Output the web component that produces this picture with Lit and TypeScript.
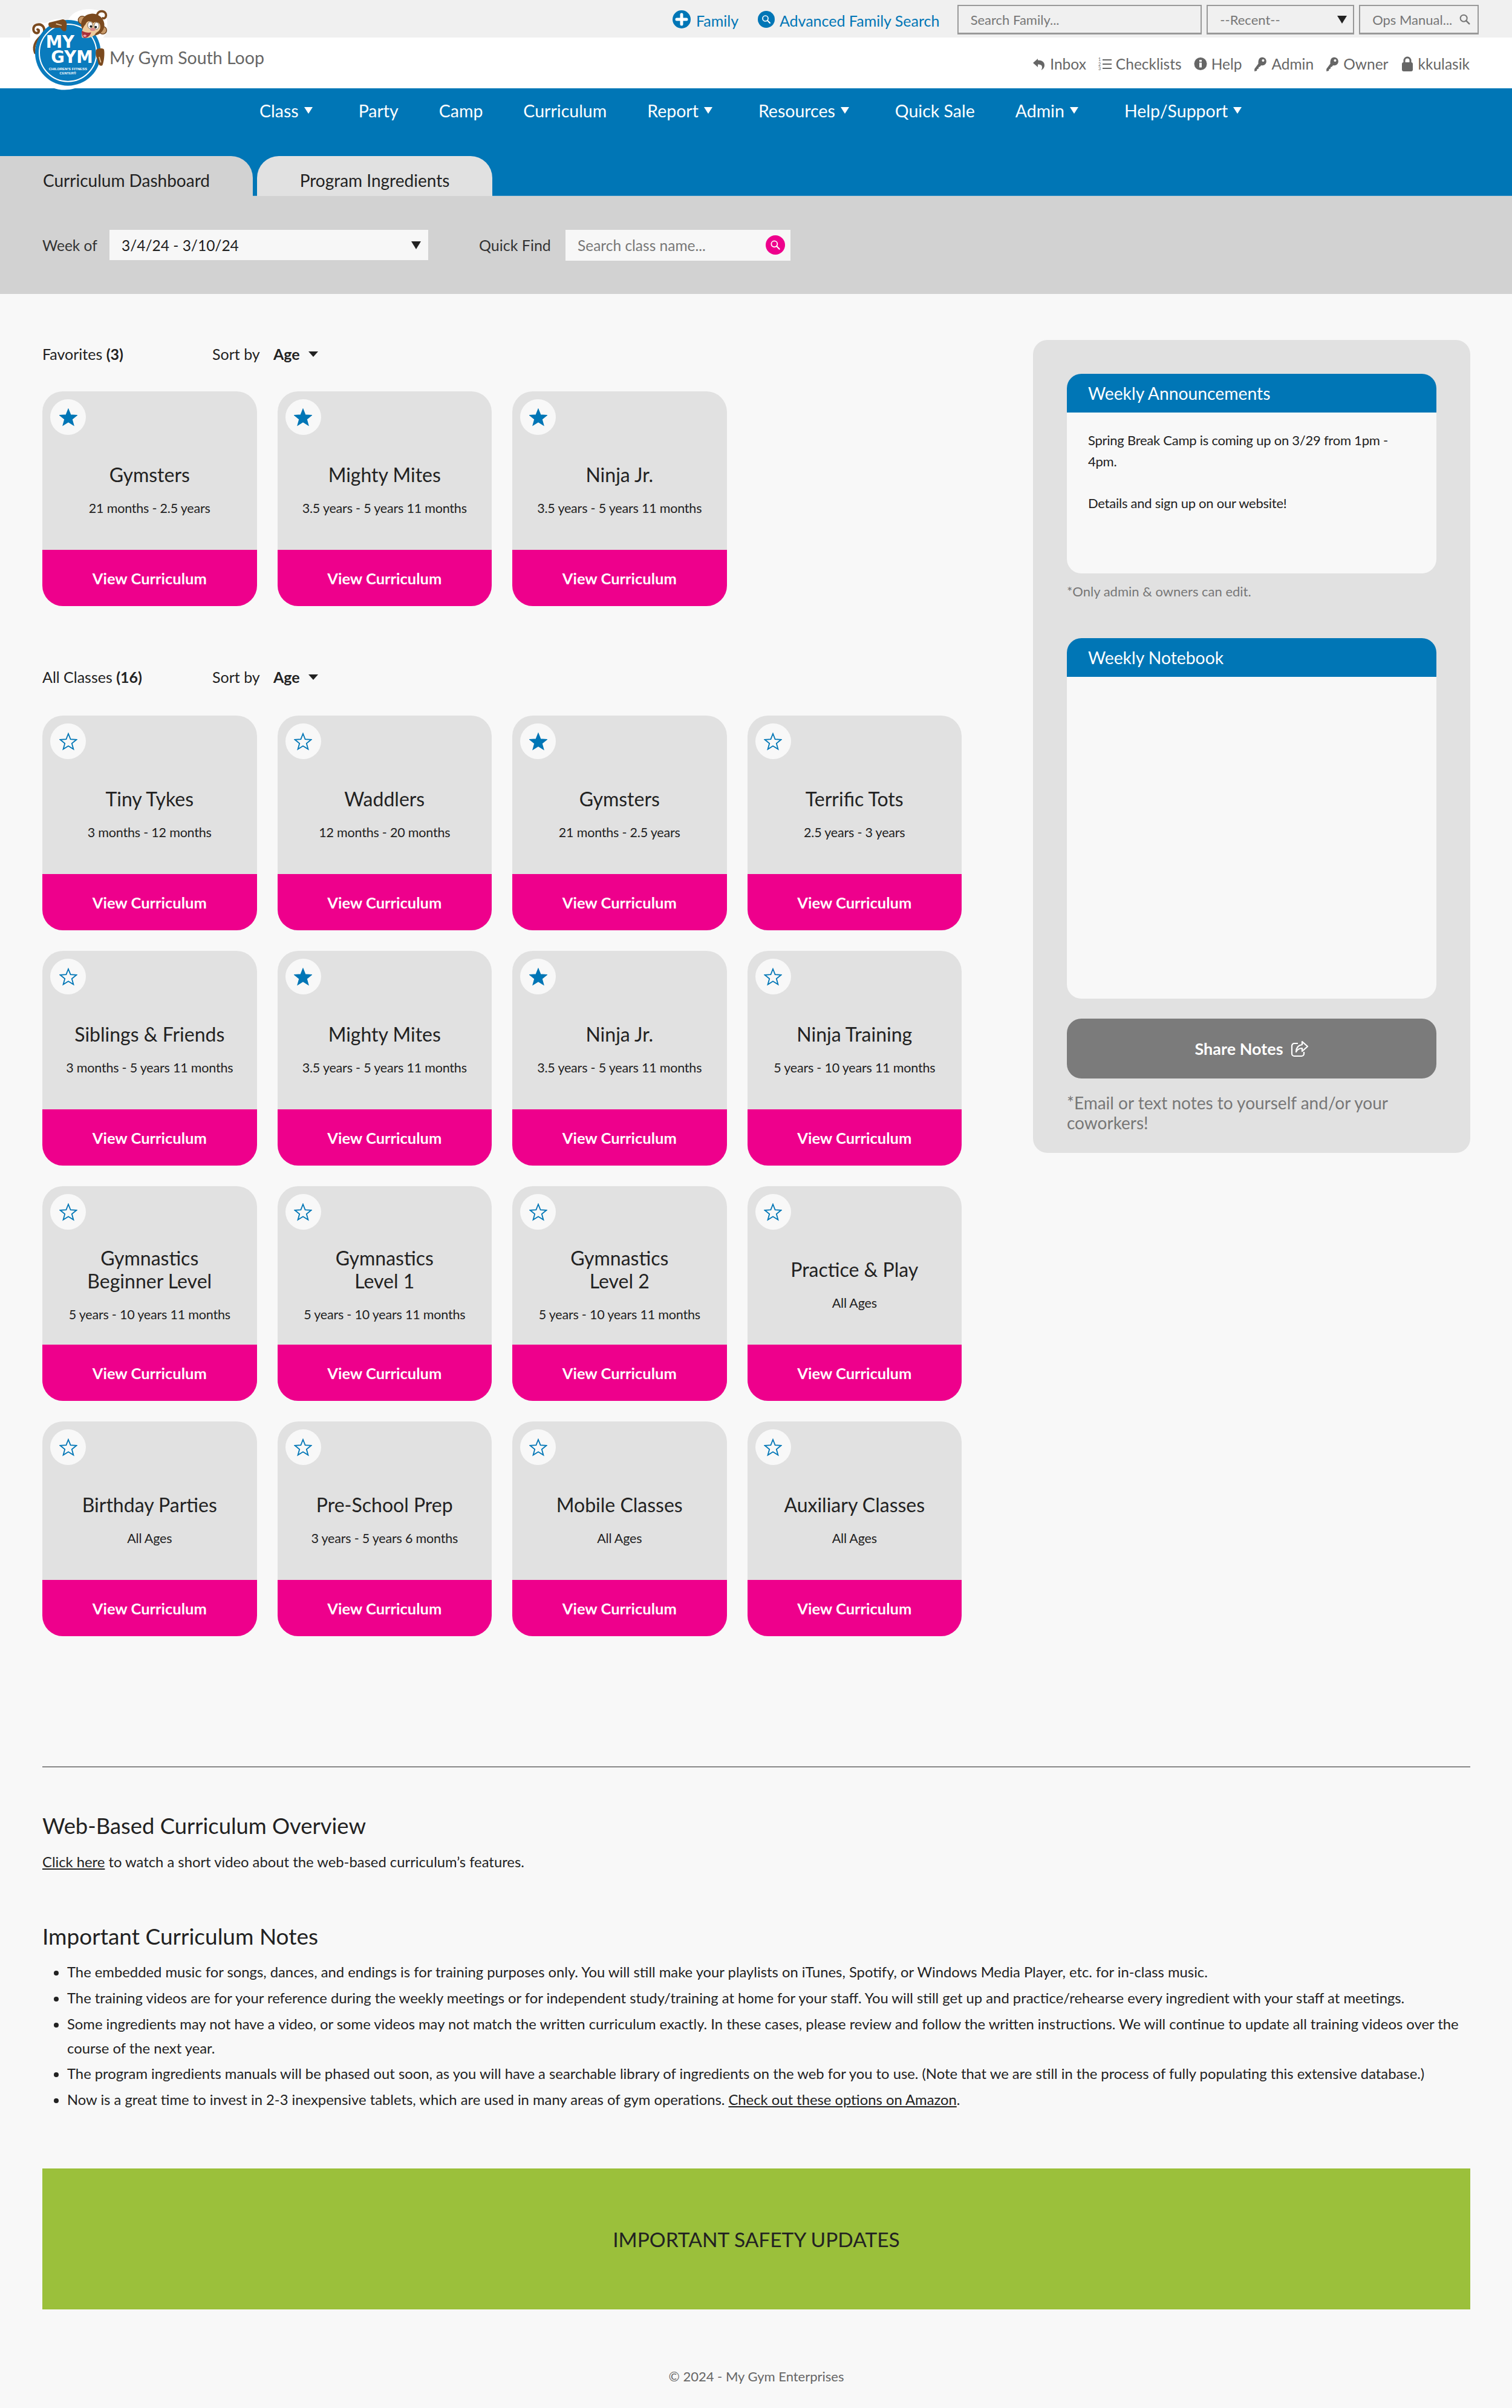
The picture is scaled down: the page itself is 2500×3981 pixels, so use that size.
import { LitElement, css, html, svg } from 'lit';
import { customElement } from 'lit/decorators.js';

interface GymClass {
  name: string[];
  ages: string;
  fav: boolean;
}

const favorites: GymClass[] = [
  { name: ['Gymsters'], ages: '21 months - 2.5 years', fav: true },
  { name: ['Mighty Mites'], ages: '3.5 years - 5 years 11 months', fav: true },
  { name: ['Ninja Jr.'], ages: '3.5 years - 5 years 11 months', fav: true },
];

const classes: GymClass[] = [
  { name: ['Tiny Tykes'], ages: '3 months - 12 months', fav: false },
  { name: ['Waddlers'], ages: '12 months - 20 months', fav: false },
  { name: ['Gymsters'], ages: '21 months - 2.5 years', fav: true },
  { name: ['Terrific Tots'], ages: '2.5 years - 3 years', fav: false },
  { name: ['Siblings & Friends'], ages: '3 months - 5 years 11 months', fav: false },
  { name: ['Mighty Mites'], ages: '3.5 years - 5 years 11 months', fav: true },
  { name: ['Ninja Jr.'], ages: '3.5 years - 5 years 11 months', fav: true },
  { name: ['Ninja Training'], ages: '5 years - 10 years 11 months', fav: false },
  { name: ['Gymnastics', 'Beginner Level'], ages: '5 years - 10 years 11 months', fav: false },
  { name: ['Gymnastics', 'Level 1'], ages: '5 years - 10 years 11 months', fav: false },
  { name: ['Gymnastics', 'Level 2'], ages: '5 years - 10 years 11 months', fav: false },
  { name: ['Practice & Play'], ages: 'All Ages', fav: false },
  { name: ['Birthday Parties'], ages: 'All Ages', fav: false },
  { name: ['Pre-School Prep'], ages: '3 years - 5 years 6 months', fav: false },
  { name: ['Mobile Classes'], ages: 'All Ages', fav: false },
  { name: ['Auxiliary Classes'], ages: 'All Ages', fav: false },
];

const navItems = [
  { label: 'Class', caret: true },
  { label: 'Party', caret: false },
  { label: 'Camp', caret: false },
  { label: 'Curriculum', caret: false },
  { label: 'Report', caret: true },
  { label: 'Resources', caret: true },
  { label: 'Quick Sale', caret: false },
  { label: 'Admin', caret: true },
  { label: 'Help/Support', caret: true },
];

const magnifier = (stroke: string) => svg`<circle cx="10" cy="10" r="6" fill="none" stroke=${stroke} stroke-width="2.2"/><path d="M14.5 14.5 20 20" stroke=${stroke} stroke-width="2.6" stroke-linecap="round"/>`;

const keyIcon = html`<svg class="ico" viewBox="0 0 24 28"><path fill="#666" fill-rule="evenodd" d="M15 2c4.500 0 8 3 8 7.500S19.500 17 15.500 17c-.8 0-1.500-.1-2.200-.3L11 19.500l-2 .5-.5 3-2.500.8-.7 3.200-4.300 1 0-4.500L8.200 13.800C7.500 6.500 10.500 2 15 2zm2 3.500a2.300 2.300 0 1 0 0 4.600 2.300 2.300 0 0 0 0-4.600z"/></svg>`;

@customElement('app-root')
export class AppRoot extends LitElement {
  static styles = css`
    :host {
      display: block;
      width: 2500px;
      min-height: 3981px;
      background: #f8f8f8;
      font-family: Lato, "Liberation Sans", sans-serif;
      color: #222;
      font-size: 24px;
    }
    * { box-sizing: border-box; }
    a { color: inherit; }

    .header { position: relative; }
    .logo { position: absolute; left: 30px; top: 0; width: 180px; height: 150px; z-index: 2; }

    .topbar {
      height: 62px;
      background: #f0f0f0;
      display: flex;
      align-items: center;
      padding: 3px 55px 0 1112px;
      color: #0076b6;
      font-size: 25px;
    }
    .toplink { display: flex; align-items: center; gap: 9px; padding-top: 2px; }
    .toplink svg { width: 30px; height: 30px; display: block; margin-top: -3px; }
    .toplink.family { width: 140px; }
    .toplink.adv { width: 331px; gap: 7px; }
    .field {
      height: 49px;
      border: 2px solid #999;
      border-bottom-width: 3px;
      color: #777;
      font-size: 22px;
      display: flex;
      align-items: center;
      justify-content: space-between;
      padding: 0 10px 0 20px;
      margin-right: 8px;
    }
    .field svg { width: 22px; height: 22px; }
    .field.family { width: 405px; }
    .field.recent { width: 244px; }
    .field.ops { width: 198px; margin-right: 0; }
    .select-caret {
      width: 0; height: 0;
      border-left: 8px solid transparent;
      border-right: 8px solid transparent;
      border-top: 13px solid #222;
    }

    .brandbar {
      height: 84px;
      background: #fff;
      display: flex;
      align-items: center;
      justify-content: space-between;
      padding: 0 70px 0 181px;
      color: #666;
    }
    .brandname { font-size: 28.500px; padding-bottom: 18px; }
    .userlinks { display: flex; gap: 20px; font-size: 24.500px; padding-top: 2px; }
    .userlink { display: flex; align-items: center; gap: 7px; }
    .ico { height: 25px; width: 22px; display: block; }

    .nav {
      height: 178px;
      background: #0076b6;
      position: relative;
      border-bottom: 1px solid #2a8cc2;
    }
    .navlinks {
      display: flex;
      padding: 20px 0 0 395.500px;
      color: #fff;
      font-size: 28.500px;
      line-height: 34px;
    }
    .navitem { padding: 0 33.500px; display: flex; gap: 9px; }
    .navitem.drop { padding-right: 42.500px; }
    .navcaret {
      width: 0; height: 0; margin-top: 11px;
      border-left: 7px solid transparent;
      border-right: 7px solid transparent;
      border-top: 11px solid #fff;
    }
    .tabs { position: absolute; left: 0; bottom: -1px; display: flex; gap: 7px; }
    .tab {
      height: 66px;
      padding-top: 8px;
      font-size: 28px;
      line-height: 64px;
      text-align: center;
      border-radius: 0 36px 0 0;
    }
    .tab.active { width: 418px; background: #d2d2d2; }
    .tab.other { width: 389px; background: #e1e1e1; border-radius: 36px 36px 0 0; }

    .filter {
      height: 162px;
      background: #d2d2d2;
      display: flex;
      align-items: center;
      padding-left: 70px;
      font-size: 24.500px;
      color: #333;
    }
    .filter .week { width: 111px; }
    .weekselect {
      width: 527px;
      height: 50px;
      background: #f7f7f7;
      display: flex;
      align-items: center;
      justify-content: space-between;
      padding: 0 12px 0 20px;
      color: #222;
    }
    .quick { width: 143px; margin-left: 84px; font-size: 25px; }
    .quicksearch {
      width: 372px;
      height: 51px;
      background: #f7f7f7;
      display: flex;
      align-items: center;
      justify-content: space-between;
      padding: 0 9px 0 20px;
      color: #777;
    }
    .pinkdot {
      width: 32px; height: 32px; border-radius: 50%;
      background: #ee008c;
      display: flex; align-items: center; justify-content: center;
    }
    .pinkdot svg { width: 20px; height: 20px; }

    .content {
      display: flex;
      justify-content: space-between;
      padding: 76px 69px 0 70px;
    }
    .left { width: 1518px; }
    .sechead {
      height: 46px;
      display: flex;
      align-items: center;
      font-size: 25px;
      margin-bottom: 39px;
    }
    .sechead.all { margin-top: 94px; margin-bottom: 41px; }
    .sechead .count { width: 281px; }
    .sechead b { font-weight: 700; }
    .sort { width: 101px; }
    .age { font-weight: 700; margin-right: 14px; }
    .sortcaret {
      width: 0; height: 0;
      border-left: 8px solid transparent;
      border-right: 8px solid transparent;
      border-top: 9px solid #222;
    }

    .grid {
      display: grid;
      grid-template-columns: repeat(4, 354.500px);
      column-gap: 34px;
      row-gap: 34px;
    }
    .card {
      position: relative;
      height: 355px;
      border-radius: 34px;
      overflow: hidden;
      background: #e1e1e1;
      display: flex;
      flex-direction: column;
    }
    .starbtn {
      position: absolute; left: 13px; top: 13px;
      width: 59px; height: 59px; border-radius: 50%;
      background: #f8f8f8;
      display: flex; align-items: center; justify-content: center;
    }
    .starbtn svg { width: 30px; height: 30px; }
    .cardbody {
      height: 262px;
      padding-top: 64px;
      display: flex;
      flex-direction: column;
      justify-content: center;
      align-items: center;
      text-align: center;
    }
    .title { font-size: 32px; line-height: 38px; }
    .ages { font-size: 21.500px; letter-spacing: -0.2px; line-height: 30px; margin-top: 21px; }
    .viewbtn {
      height: 93px;
      background: #ee008c;
      color: #fff;
      font-weight: 700;
      font-size: 25.500px;
      display: flex;
      align-items: center;
      justify-content: center;
    }

    .side {
      width: 723px;
      background: #e1e1e1;
      border-radius: 24px;
      padding: 56px 56px 0;
      height: 1344px;
    }
    .panelhead {
      height: 64px;
      background: #0076b6;
      color: #fff;
      font-size: 28.300px;
      line-height: 64px;
      padding-left: 35px;
      border-radius: 24px 24px 0 0;
    }
    .panelbody { background: #f8f8f8; border-radius: 0 0 24px 24px; }
    .panelbody.news { height: 266px; padding: 28px 35px; font-size: 22px; letter-spacing: -0.25px; line-height: 35px; }
    .panelbody.news p { margin: 0 0 34px; }
    .panelbody.notes { height: 532px; }
    .only { color: #777; font-size: 22px; line-height: 30px; margin: 15px 0 62px; }
    .sharebtn {
      height: 99px;
      margin-top: 33px;
      background: #7b7b7b;
      color: #fff;
      font-weight: 700;
      font-size: 27px;
      border-radius: 24px;
      display: flex; align-items: center; justify-content: center; gap: 12px;
    }
    .sharebtn svg { width: 30px; height: 28px; }
    .sharenote { color: #777; font-size: 28px; line-height: 33px; margin-top: 24px; }

    .lower { padding: 0 69px 0 70px; }
    .rule { border: 0; border-top: 2px solid #888; margin: 215px 0 0; }
    h2 { font-weight: 400; font-size: 37px; line-height: 46px; margin: 0; }
    h2.overview { margin-top: 73px; font-size: 36.400px; }
    h2.notes { margin-top: 80px; }
    .lower p { margin: 17px 0 0; font-size: 23.800px; line-height: 40px; }
    .lower ul { margin: 16px 0 0; padding-left: 41px; font-size: 23.800px; line-height: 40px; }
    .lower li { margin-bottom: 2.800px; }
    .safety {
      margin-top: 94px;
      height: 233px;
      background: #9bc03b;
      display: flex; align-items: center; justify-content: center;
      font-size: 33.500px;
    }
    .footer { height: 163px; padding-top: 89px; text-align: center; font-size: 22px; line-height: 44px; color: #666; }
  `;

  private star(filled: boolean) {
    const pts = '15,2 18.600,11.200 28.500,11.800 20.800,18 23.400,27.600 15,22.200 6.600,27.600 9.200,18 1.500,11.800 11.400,11.200';
    return html`<div class="starbtn"><svg viewBox="0 0 30 30">
      <polygon points=${pts} fill=${filled ? '#0076b6' : 'none'} stroke="#0076b6" stroke-width="1.800"></polygon>
    </svg></div>`;
  }

  private card(c: GymClass) {
    return html`<div class="card">
      ${this.star(c.fav)}
      <div class="cardbody">
        <div class="title">${c.name.map((l) => html`<div>${l}</div>`)}</div>
        <div class="ages">${c.ages}</div>
      </div>
      <div class="viewbtn">View Curriculum</div>
    </div>`;
  }

  private logo() {
    return html`<svg class="logo" viewBox="0 0 540 450">
      <path d="M60 170c0-50 40-65 75-55 30-20 90-30 110-10 30-70 130-70 190-40 15 60 10 120-40 140l20 100c5 30-10 50-30 50-40 90-190 130-270 40-40-50-50-100-40-140-20-30-15-60-15-85z" fill="#fff"/>
      <path d="M84 262C68 222 98 192 122 172c18-26 2-56-28-50-24 6-24 40-2 42 12 0 14-16 4-18" fill="none" stroke="#7b4a1f" stroke-width="12" stroke-linecap="round"/>
      <circle cx="247" cy="262" r="163" fill="#0a7bbd"/>
      <circle cx="247" cy="262" r="142" fill="none" stroke="#fff" stroke-width="6"/>
      <text x="137" y="236" font-family="DejaVu Sans" font-weight="700" font-size="84" textLength="142" lengthAdjust="spacingAndGlyphs" fill="#fff">MY</text>
      <text x="163" y="313" font-family="DejaVu Sans" font-weight="700" font-size="84" textLength="208" lengthAdjust="spacingAndGlyphs" fill="#fff">GYM</text>
      <text x="247" y="349" text-anchor="middle" font-family="Liberation Sans" font-weight="700" font-size="17" textLength="190" lengthAdjust="spacingAndGlyphs" fill="#fff">CHILDREN'S FITNESS</text>
      <text x="247" y="369" text-anchor="middle" font-family="Liberation Sans" font-weight="700" font-size="17" fill="#fff">CENTER®</text>
      <path d="M155 112l62-15c14-4 24 8 24 24l-2 26c-1 10-14 10-20 4l-10-14-40 2c-18-2-24-22-14-27z" fill="#7b4a1f"/>
      <path d="M188 118l28 8" stroke="#e8c9a0" stroke-width="5"/>
      <path d="M386 250c0-10 36-14 40-4 4 20 0 60-8 78-6 6-18 0-20-8l-6-26c-8-8-8-30-6-40z" fill="#7b4a1f"/>
      <path d="M402 282l8 28" stroke="#e8c9a0" stroke-width="5"/>
      <path d="M392 72c8-24 44-20 44 4 0 12-10 18-16 14" fill="none" stroke="#7b4a1f" stroke-width="11" stroke-linecap="round"/>
      <circle cx="318" cy="100" r="20" fill="#c89a6a" stroke="#6b3f18" stroke-width="4"/>
      <circle cx="420" cy="150" r="19" fill="#c89a6a" stroke="#6b3f18" stroke-width="4"/>
      <ellipse cx="370" cy="122" rx="58" ry="54" transform="rotate(15 370 122)" fill="#7b4a1f"/>
      <path d="M335 120c6-20 30-18 36-4 10-12 36-6 36 12 4 22-14 30-22 36-6 20-50 30-68 22-6-20 2-50 18-66z" fill="#eecb9c"/>
      <ellipse cx="357" cy="125" rx="12" ry="17" fill="#fff" stroke="#333" stroke-width="2"/>
      <ellipse cx="389" cy="128" rx="12" ry="17" fill="#fff" stroke="#333" stroke-width="2"/>
      <circle cx="361" cy="131" r="6" fill="#222"/>
      <circle cx="385" cy="134" r="6" fill="#222"/>
      <ellipse cx="370" cy="146" rx="13" ry="8" fill="#d98a8a"/>
      <path d="M316 152c16 10 36 12 46 8-2 16-20 30-34 28-10-4-14-24-12-36z" fill="#a8323c"/>
      <path d="M322 176c6-6 14-6 18 2-4 6-14 8-18-2z" fill="#f2a3b0"/>
    </svg>`;
  }

  render() {
    return html`
      <div class="header">
        ${this.logo()}
        <div class="topbar">
          <div class="toplink family">
            <svg viewBox="0 0 30 30"><circle cx="15" cy="15" r="15" fill="#0076b6"/><path d="M15 7v16M7 15h16" stroke="#fff" stroke-width="5" stroke-linecap="round"/></svg>
            Family
          </div>
          <div class="toplink adv">
            <svg viewBox="0 0 30 30"><circle cx="15" cy="15" r="14" fill="#0076b6"/><g transform="translate(6 6) scale(.75)">${magnifier('#fff')}</g></svg>
            Advanced Family Search
          </div>
          <div class="field family">Search Family...</div>
          <div class="field recent">--Recent--<span class="select-caret"></span></div>
          <div class="field ops">Ops Manual...<svg viewBox="0 0 24 24">${magnifier('#777')}</svg></div>
        </div>
        <div class="brandbar">
          <div class="brandname">My Gym South Loop</div>
          <div class="userlinks">
            <div class="userlink"><svg class="ico" viewBox="0 0 22 25"><path fill="#666" d="M9 4 1 11 9 18v-4.500c5 0 7 1.500 7 4.500 0 2-.5 3.500-1.500 5 3.500-1.500 5.500-4.500 5.500-8 0-5.500-4-8.500-11-8.500z"/></svg>Inbox</div>
            <div class="userlink"><svg class="ico" viewBox="0 0 22 25" fill="#666"><text x="0" y="8" font-size="7" font-family="Lato">1</text><text x="0" y="15.500" font-size="7" font-family="Lato">2</text><text x="0" y="23" font-size="7" font-family="Lato">3</text><rect x="7" y="5" width="15" height="2"/><rect x="7" y="12" width="15" height="2"/><rect x="7" y="19" width="15" height="2"/></svg>Checklists</div>
            <div class="userlink"><svg class="ico" viewBox="0 0 22 25"><circle cx="11" cy="12.500" r="10.500" fill="#666"/><rect x="9" y="10.500" width="4" height="8" fill="#fff"/><rect x="9" y="6" width="4" height="3" fill="#fff"/></svg>Help</div>
            <div class="userlink">${keyIcon}Admin</div>
            <div class="userlink">${keyIcon}Owner</div>
            <div class="userlink"><svg class="ico" viewBox="0 0 22 25"><rect x="2" y="10" width="18" height="15" rx="3" fill="#666"/><path d="M6 11V7a5 5 0 0 1 10 0v4" fill="none" stroke="#666" stroke-width="3"/></svg>kkulasik</div>
          </div>
        </div>
        <div class="nav">
          <div class="navlinks">
            ${navItems.map((n) => html`<div class="navitem ${n.caret ? 'drop' : ''}">${n.label}${n.caret ? html`<span class="navcaret"></span>` : ''}</div>`)}
          </div>
          <div class="tabs">
            <div class="tab active">Curriculum Dashboard</div>
            <div class="tab other">Program Ingredients</div>
          </div>
        </div>
        <div class="filter">
          <div class="week">Week of</div>
          <div class="weekselect">3/4/24 - 3/10/24<span class="select-caret"></span></div>
          <div class="quick">Quick Find</div>
          <div class="quicksearch">Search class name...<span class="pinkdot"><svg viewBox="0 0 24 24">${magnifier('#fff')}</svg></span></div>
        </div>
      </div>

      <div class="content">
        <div class="left">
          <div class="sechead">
            <div class="count">Favorites <b>(3)</b></div>
            <div class="sort">Sort by</div><div class="age">Age</div><span class="sortcaret"></span>
          </div>
          <div class="grid">${favorites.map((c) => this.card(c))}</div>
          <div class="sechead all">
            <div class="count">All Classes <b>(16)</b></div>
            <div class="sort">Sort by</div><div class="age">Age</div><span class="sortcaret"></span>
          </div>
          <div class="grid">${classes.map((c) => this.card(c))}</div>
        </div>
        <div class="side">
          <div class="panelhead">Weekly Announcements</div>
          <div class="panelbody news">
            <p>Spring Break Camp is coming up on 3/29 from 1pm - 4pm.</p>
            <p>Details and sign up on our website!</p>
          </div>
          <div class="only">*Only admin &amp; owners can edit.</div>
          <div class="panelhead">Weekly Notebook</div>
          <div class="panelbody notes"></div>
          <div class="sharebtn">Share Notes
            <svg viewBox="0 0 30 28"><path d="M12 5H6a4 4 0 0 0-4 4v13a4 4 0 0 0 4 4h12a4 4 0 0 0 4-4v-3" fill="none" stroke="#fff" stroke-width="2.200"/><path d="M19 2l9 8-9 8v-5c-5 0-8 2-10 6 0-7 4-11 10-12z" fill="none" stroke="#fff" stroke-width="2.200" stroke-linejoin="round"/></svg>
          </div>
          <div class="sharenote">*Email or text notes to yourself and/or your coworkers!</div>
        </div>
      </div>

      <div class="lower">
        <hr class="rule" />
        <h2 class="overview">Web-Based Curriculum Overview</h2>
        <p><a href="#">Click here</a> to watch a short video about the web-based curriculum’s features.</p>
        <h2 class="notes">Important Curriculum Notes</h2>
        <ul>
          <li>The embedded music for songs, dances, and endings is for training purposes only. You will still make your playlists on iTunes, Spotify, or Windows Media Player, etc. for in-class music.</li>
          <li>The training videos are for your reference during the weekly meetings or for independent study/training at home for your staff. You will still get up and practice/rehearse every ingredient with your staff at meetings.</li>
          <li>Some ingredients may not have a video, or some videos may not match the written curriculum exactly. In these cases, please review and follow the written instructions. We will continue to update all training videos over the course of the next year.</li>
          <li>The program ingredients manuals will be phased out soon, as you will have a searchable library of ingredients on the web for you to use. (Note that we are still in the process of fully populating this extensive database.)</li>
          <li>Now is a great time to invest in 2-3 inexpensive tablets, which are used in many areas of gym operations. <a href="#">Check out these options on Amazon</a>.</li>
        </ul>
        <div class="safety">IMPORTANT SAFETY UPDATES</div>
        <div class="footer">© 2024 - My Gym Enterprises</div>
      </div>
    `;
  }
}
